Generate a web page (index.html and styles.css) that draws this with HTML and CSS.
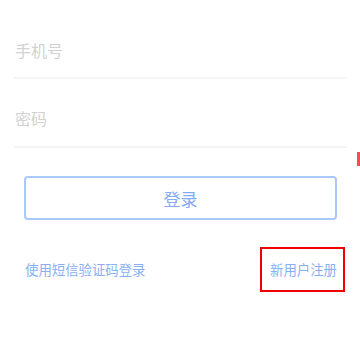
FILE: index.html
```html
<!DOCTYPE html>
<html lang="zh">
<head>
<meta charset="utf-8">
<link rel="stylesheet" href="styles.css">
</head>
<body>
<div class="page">
  <form class="form">
    <div class="field"><span class="placeholder">手机号</span></div>
    <div class="field"><span class="placeholder">密码</span></div>
    <button type="button" class="login">登录</button>
    <div class="links">
      <a class="link">使用短信验证码登录</a>
      <a class="link register">新用户注册<span class="highlight"></span></a>
    </div>
  </form>
  <span class="edge-mark"></span>
</div>
</body>
</html>
```
FILE: styles.css
```css
html, body {
  margin: 0;
  padding: 0;
  background: #ffffff;
}
body {
  font-family: "Noto Sans CJK SC", "Noto Sans", sans-serif;
}
.page {
  position: relative;
  width: 360px;
  height: 360px;
  overflow: hidden;
}
.form {
  display: flex;
  flex-direction: column;
  padding-top: 11px;
}
.field {
  margin: 0 13px 0 14px;
  height: 68px;
  padding-top: 30px;
  box-sizing: border-box;
  border-bottom: 2px solid #f4f4f4;
}
.field + .field {
  height: 69px;
}
.placeholder {
  display: block;
  font-size: 16px;
  line-height: 18px;
  color: #d2d2d2;
  padding-left: 1px;
}
.login {
  margin: 28px 23px 0 24px;
  height: 44px;
  border: 2px solid #a9c8fb;
  border-radius: 4px;
  background: #ffffff;
  color: #82aaf5;
  font-family: inherit;
  font-size: 17px;
  padding: 0;
}
.links {
  display: flex;
  justify-content: space-between;
  align-items: center;
  margin: 40px 23px 0 25px;
}
.link {
  font-size: 13.4px;
  line-height: 18px;
  color: #88aff5;
}
.register {
  position: relative;
}
.highlight {
  position: absolute;
  left: -10px;
  top: -13px;
  width: 85px;
  height: 45px;
  border: 2px solid #f00000;
  box-sizing: border-box;
}
.edge-mark {
  position: absolute;
  left: 357px;
  top: 152px;
  width: 3px;
  height: 14px;
  background: #f05050;
}
```
